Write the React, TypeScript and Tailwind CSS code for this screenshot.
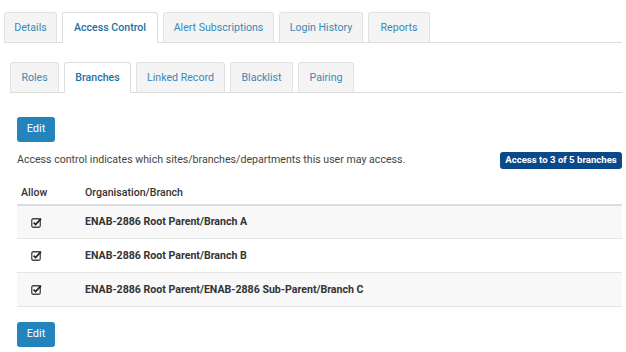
import { ReactNode } from "react";

const topTabs = ["Details", "Access Control", "Alert Subscriptions", "Login History", "Reports"];
const subTabs = ["Roles", "Branches", "Linked Record", "Blacklist", "Pairing"];

const branches = [
    "ENAB-2886 Root Parent/Branch A",
    "ENAB-2886 Root Parent/Branch B",
    "ENAB-2886 Root Parent/ENAB-2886 Sub-Parent/Branch C",
];

function Tab({ label, active, width }: { label: string; active: boolean; width: string }) {
    if (active) {
        return (
            <div className={`${width} h-[31px] -mb-px flex items-center justify-center rounded-t-[3px] border border-b-0 border-[#dddddd] bg-white text-[10.6px] font-medium text-[#1f6f9f]`}>
                {label}
            </div>
        );
    }
    return (
        <div className={`${width} h-[30px] flex items-center justify-center rounded-t-[3px] border border-b-0 border-[#e2e2e2] bg-[#f4f4f4] text-[10.6px] text-[#3a87b8]`}>
            {label}
        </div>
    );
}

function TabBar({ children, className }: { children: ReactNode; className: string }) {
    return <div className={`flex items-end gap-[5px] border-b border-[#dddddd] ${className}`}>{children}</div>;
}

function CheckIcon() {
    return (
        <svg width="11" height="11" viewBox="0 0 11 11">
            <rect x="0.75" y="1.75" width="8.5" height="8.5" rx="1.5" fill="none" stroke="#444" strokeWidth="1.3" />
            <path d="M2.6 5.6 L4.6 7.5 L10 1.6" fill="none" stroke="#222" strokeWidth="1.7" />
        </svg>
    );
}

function EditButton() {
    return (
        <button className="w-[38px] h-[25px] rounded-[3px] bg-[#2283bd] text-[11px] text-white">Edit</button>
    );
}

export default function App() {
    const topWidths = ["w-[53px]", "w-[96px]", "w-[111px]", "w-[84px]", "w-[62px]"];
    const subWidths = ["w-[49px]", "w-[67px]", "w-[89px]", "w-[63px]", "w-[56px]"];

    return (
        <div className="w-[626px] h-[352px] bg-white overflow-hidden font-['Roboto',sans-serif] text-[#333]">
            <TabBar className="ml-[4px] mr-[4px] mt-[12px]">
                {topTabs.map((t, i) => (
                    <Tab key={t} label={t} active={i === 1} width={topWidths[i]} />
                ))}
            </TabBar>

            <TabBar className="ml-[10px] mr-[4px] mt-[19px]">
                {subTabs.map((t, i) => (
                    <Tab key={t} label={t} active={i === 1} width={subWidths[i]} />
                ))}
            </TabBar>

            <div className="pl-[17px] pr-[4px]">
                <div className="mt-[22px]">
                    <EditButton />
                </div>

                <div className="mt-[10px] flex items-center justify-between">
                    <p className="text-[10.6px] text-[#444]">
                        Access control indicates which sites/branches/departments this user may access.
                    </p>
                    <span className="h-[17px] w-[122px] flex items-center justify-center rounded-[3px] bg-[#0b4a8a] text-[9.6px] font-bold text-white">
                        Access to 3 of 5 branches
                    </span>
                </div>

                <table className="mt-[14px] w-full border-collapse text-[10.6px]">
                    <thead>
                        <tr className="border-b-2 border-[#dddddd]">
                            <th className="w-[68px] h-[22px] pl-[4px] text-left font-medium text-[#333]">Allow</th>
                            <th className="text-left font-medium text-[#333]">Organisation/Branch</th>
                        </tr>
                    </thead>
                    <tbody>
                        {branches.map((b, i) => (
                            <tr key={b} className={`border-b border-[#e4e4e4] ${i % 2 === 0 ? "bg-[#f8f8f8]" : "bg-white"}`}>
                                <td className="h-[34px] pl-[14px]">
                                    <CheckIcon />
                                </td>
                                <td className="font-bold text-[#333]">{b}</td>
                            </tr>
                        ))}
                    </tbody>
                </table>

                <div className="mt-[13px]">
                    <EditButton />
                </div>
            </div>
        </div>
    );
}
